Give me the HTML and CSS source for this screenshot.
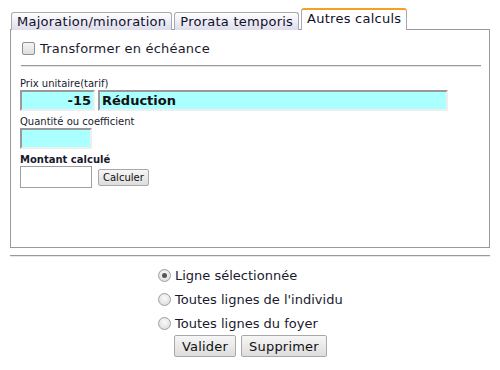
FILE: index.html
```html
<!DOCTYPE html>
<html lang="fr">
<head>
    <meta charset="UTF-8">
    <title>Autres calculs</title>
    <link rel="stylesheet" href="styles.css">
</head>
<body>
    <div class="onglets">
        <div class="onglet">Majoration/minoration</div>
        <div class="onglet">Prorata temporis</div>
        <div class="onglet actif">Autres calculs</div>
    </div>
    <div class="panneau">
        <label class="echeance"><span class="case"></span>Transformer en échéance</label>
        <hr class="sep">
        <div class="lib">Prix unitaire(tarif)</div>
        <div class="ligne">
            <input type="text" class="champ prix" value="-15">
            <input type="text" class="champ libelle" value="Réduction">
        </div>
        <div class="lib">Quantité ou coefficient</div>
        <div class="ligne">
            <input type="text" class="champ quantite">
        </div>
        <div class="lib gras">Montant calculé</div>
        <div class="ligne">
            <input type="text" class="montant">
            <button class="calculer">Calculer</button>
        </div>
    </div>
    <hr class="bas">
    <div class="choix">
        <label class="option"><span class="radio coche"></span>Ligne sélectionnée</label>
        <label class="option"><span class="radio"></span>Toutes lignes de l'individu</label>
        <label class="option"><span class="radio"></span>Toutes lignes du foyer</label>
        <div class="actions">
            <button class="bouton">Valider</button>
            <button class="bouton">Supprimer</button>
        </div>
    </div>
</body>
</html>
```

FILE: styles.css
```css
body {
    font-family: 'DejaVu Sans', Verdana, sans-serif;
    color: #1a1a2e;
    margin: 0;
    padding: 10px;
    background: #fff;
}
.onglets {
    display: flex;
    align-items: flex-end;
    gap: 2px;
    padding-left: 1px;
    height: 20px;
    margin-bottom: -1px;
    position: relative;
}
.onglet {
    font-size: 13px;
    letter-spacing: 0.25px;
    height: 17px;
    line-height: 17px;
    padding: 0 5px;
    border: 1px solid #a8a8b0;
    border-bottom: none;
    border-radius: 3px 3px 0 0;
    background: linear-gradient(#ffffff, #dcdcec);
    color: #10102a;
}
.onglet.actif {
    background: #fff;
    border-top: 2px solid #f5a020;
    height: 19px;
    padding-bottom: 1px;
}
.panneau {
    border: 1px solid #999;
    height: 199px;
    padding: 9px 8px 9px 9px;
}
.echeance {
    display: flex;
    align-items: center;
    font-size: 13px;
    letter-spacing: 0.2px;
    height: 18px;
    margin-left: 2px;
}
.case {
    width: 11px;
    height: 11px;
    border: 1px solid #8f8f8f;
    border-radius: 2px;
    background: linear-gradient(#f4f4f4, #dedede);
    margin-right: 5px;
}
.sep {
    border: none;
    border-top: 1px solid #999;
    border-bottom: 1px solid #e4e4e4;
    margin: 8px 0 11px 1px;
}
.lib {
    font-size: 10px;
    height: 12px;
    line-height: 12px;
    margin-bottom: 0;
}
.gras {
    font-weight: bold;
}
.ligne {
    display: flex;
    align-items: center;
    gap: 3px;
    margin-bottom: 5px;
}
.champ {
    font-family: 'DejaVu Sans', Verdana, sans-serif;
    font-size: 13px;
    font-weight: bold;
    color: #111;
    background: #aaffff;
    height: 21px;
    box-sizing: border-box;
    border: 2px solid;
    border-color: #999 #eee #eee #999;
    padding: 0 2px;
    margin: 0;
}
.prix {
    width: 75px;
    text-align: right;
}
.libelle {
    width: 350px;
}
.quantite {
    width: 72px;
}
.montant {
    width: 72px;
    height: 22px;
    box-sizing: border-box;
    border: 1px solid #a0a0a0;
    margin: 0;
}
.calculer {
    font-family: 'DejaVu Sans', Verdana, sans-serif;
    font-size: 10px;
    color: #111;
    height: 17px;
    padding: 0 4px;
    margin-left: 3px;
    border: 1px solid #a9a9a9;
    border-radius: 2px;
    background: linear-gradient(#f6f6f6, #dddddd);
}
.bas {
    border: none;
    border-top: 1px solid #999;
    border-bottom: 1px solid #e8e8e8;
    margin: 7px 0 0;
}
.choix {
    display: flex;
    flex-direction: column;
    padding-left: 148px;
    padding-top: 6px;
}
.option {
    display: flex;
    align-items: center;
    font-size: 13px;
    height: 24px;
}
.radio {
    width: 11px;
    height: 11px;
    border: 1px solid #a0a0a0;
    border-radius: 50%;
    background: radial-gradient(circle at 50% 40%, #fbfbfb, #d6d6d6);
    margin-right: 4px;
    position: relative;
}
.radio.coche::after {
    content: "";
    position: absolute;
    left: 3px;
    top: 3px;
    width: 5px;
    height: 5px;
    border-radius: 50%;
    background: #555;
}
.actions {
    display: flex;
    gap: 5px;
    padding-left: 16px;
    margin-top: 0;
}
.bouton {
    font-family: 'DejaVu Sans', Verdana, sans-serif;
    font-size: 13px;
    letter-spacing: 0.2px;
    color: #111;
    height: 22px;
    padding: 0 7px;
    border: 1px solid #a9a9a9;
    border-radius: 2px;
    background: linear-gradient(#f6f6f6, #dddddd);
}
```
